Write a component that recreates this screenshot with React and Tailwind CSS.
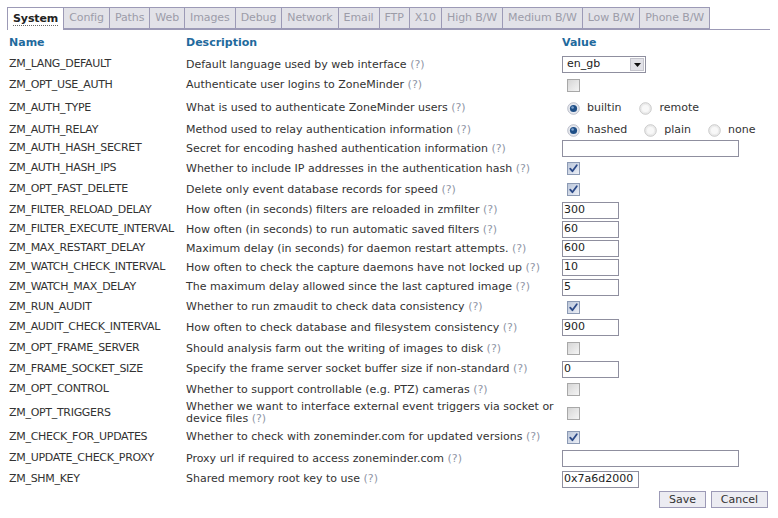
import React from "react";

const tabs = ["System","Config","Paths","Web","Images","Debug","Network","Email","FTP","X10","High B/W","Medium B/W","Low B/W","Phone B/W"];

const rows = [
  { n: "ZM_LANG_DEFAULT", d: "Default language used by web interface", h: 21, v: { t: "select", val: "en_gb" } },
  { n: "ZM_OPT_USE_AUTH", d: "Authenticate user logins to ZoneMinder", h: 20, v: { t: "check", c: false } },
  { n: "ZM_AUTH_TYPE", d: "What is used to authenticate ZoneMinder users", h: 26, v: { t: "radio", opts: [["builtin", true, 18], ["remote", false, 0]] } },
  { n: "ZM_AUTH_RELAY", d: "Method used to relay authentication information", h: 18, v: { t: "radio", opts: [["hashed", true, 17], ["plain", false, 17], ["none", false, 0]] } },
  { n: "ZM_AUTH_HASH_SECRET", d: "Secret for encoding hashed authentication information", h: 19, v: { t: "text", w: 177, val: "" } },
  { n: "ZM_AUTH_HASH_IPS", d: "Whether to include IP addresses in the authentication hash", h: 21, v: { t: "check", c: true } },
  { n: "ZM_OPT_FAST_DELETE", d: "Delete only event database records for speed", h: 21, v: { t: "check", c: true } },
  { n: "ZM_FILTER_RELOAD_DELAY", d: "How often (in seconds) filters are reloaded in zmfilter", h: 20, v: { t: "text", w: 57, val: "300" } },
  { n: "ZM_FILTER_EXECUTE_INTERVAL", d: "How often (in seconds) to run automatic saved filters", h: 19, v: { t: "text", w: 57, val: "60" } },
  { n: "ZM_MAX_RESTART_DELAY", d: "Maximum delay (in seconds) for daemon restart attempts.", h: 19, v: { t: "text", w: 57, val: "600" } },
  { n: "ZM_WATCH_CHECK_INTERVAL", d: "How often to check the capture daemons have not locked up", h: 19, v: { t: "text", w: 57, val: "10" } },
  { n: "ZM_WATCH_MAX_DELAY", d: "The maximum delay allowed since the last captured image", h: 20, v: { t: "text", w: 57, val: "5" } },
  { n: "ZM_RUN_AUDIT", d: "Whether to run zmaudit to check data consistency", h: 20, v: { t: "check", c: true } },
  { n: "ZM_AUDIT_CHECK_INTERVAL", d: "How often to check database and filesystem consistency", h: 21, v: { t: "text", w: 57, val: "900" } },
  { n: "ZM_OPT_FRAME_SERVER", d: "Should analysis farm out the writing of images to disk", h: 21, v: { t: "check", c: false } },
  { n: "ZM_FRAME_SOCKET_SIZE", d: "Specify the frame server socket buffer size if non-standard", h: 20, v: { t: "text", w: 57, val: "0" } },
  { n: "ZM_OPT_CONTROL", d: "Whether to support controllable (e.g. PTZ) cameras", h: 21, v: { t: "check", c: false } },
  { n: "ZM_OPT_TRIGGERS", d: "Whether we want to interface external event triggers via socket or", d2: "device files", h: 26, v: { t: "check", c: false } },
  { n: "ZM_CHECK_FOR_UPDATES", d: "Whether to check with zoneminder.com for updated versions", h: 22, v: { t: "check", c: true } },
  { n: "ZM_UPDATE_CHECK_PROXY", d: "Proxy url if required to access zoneminder.com", h: 21, v: { t: "text", w: 177, val: "" } },
  { n: "ZM_SHM_KEY", d: "Shared memory root key to use", h: 20, v: { t: "text", w: 77, val: "0x7a6d2000" } },
];

function Check({ c }) {
  return (
    <svg width="13" height="13" viewBox="0 0 13 13" className="ml-[5px]">
      <defs>
        <linearGradient id={c ? "gc" : "gu"} x1="0" y1="0" x2="1" y2="1">
          <stop offset="0" stopColor={c ? "#b8c4d8" : "#d4d4d4"} />
          <stop offset="1" stopColor={c ? "#eef1f8" : "#f6f6f6"} />
        </linearGradient>
      </defs>
      <rect x="0.5" y="0.5" width="12" height="12" fill={`url(#${c ? "gc" : "gu"})`} stroke={c ? "#8c9ab4" : "#a8a8a8"} />
      {c && <path d="M3.2 6.6 L5.4 9.2 L9.8 3.2" fill="none" stroke="#2c4a88" strokeWidth="1.8" strokeLinecap="round" strokeLinejoin="round" />}
    </svg>
  );
}

function Radio({ on }) {
  return (
    <svg width="13" height="13" viewBox="0 0 13 13">
      <circle cx="6.5" cy="6.5" r="5.8" fill={on ? "#e6e8ee" : "#ececec"} stroke={on ? "#b4b8c4" : "#c4c4c4"} strokeWidth="0.9" />
      {on ? (
        <>
          <circle cx="6.5" cy="6.5" r="3.6" fill="#1f4f86" />
          <circle cx="5.6" cy="5.5" r="1.3" fill="#7ea3cf" />
        </>
      ) : (
        <circle cx="6.5" cy="6.5" r="3.6" fill="#f8f8f8" />
      )}
    </svg>
  );
}

function Value({ v }) {
  if (v.t === "select") {
    return (
      <div className="flex h-[17px] w-[84px] items-center border border-[#8f8f9f] bg-white">
        <span className="flex-1 pl-[4px] text-[11px] text-[#222]">{v.val}</span>
        <span className="mr-[1px] flex h-[13px] w-[14px] items-center justify-center border border-[#c4c4cc] bg-[#e2e2e8]">
          <svg width="7" height="4" viewBox="0 0 7 4"><path d="M0 0 H7 L3.5 4 Z" fill="#111" /></svg>
        </span>
      </div>
    );
  }
  if (v.t === "check") return <Check c={v.c} />;
  if (v.t === "radio") {
    return (
      <div className="flex items-center pl-[5px]">
        {v.opts.map(([label, on, gap]) => (
          <div key={label} className="flex items-center" style={{ marginRight: gap }}>
            <Radio on={on} />
            <span className="ml-[7px] text-[11px] text-[#333]">{label}</span>
          </div>
        ))}
      </div>
    );
  }
  return (
    <div className="flex h-[17px] items-center border border-[#8f8f9f] bg-white pl-[1px] text-[11px] text-[#222]" style={{ width: v.w }}>
      {v.val}
    </div>
  );
}

const Q = () => <span className="text-[#8f96a6]">(?)</span>;

export default function App() {
  return (
    <div className="h-[518px] w-[778px] overflow-hidden bg-white text-[11px] text-[#333]" style={{ fontFamily: '"DejaVu Sans", Verdana, sans-serif' }}>
      <div className="ml-[7px] mr-[8px] mt-[7px] flex border-b border-[#9c9ab6]">
        {tabs.map((t, i) => (
          <div
            key={t}
            className={
              i === 0
                ? "mb-[-1px] flex h-[23px] items-center border border-b-0 border-[#9c9ab6] bg-white px-[5px] font-bold tracking-[-0.1px] text-[#222]"
                : "flex h-[22px] items-center border border-l-0 border-[#9c9ab6] bg-[#e2e2e8] px-[5px] tracking-[-0.1px] text-[#9c9ca8]"
            }
          >
            <span className={i === 0 ? "border-b border-dotted border-[#666] leading-[12px]" : ""}>{t}</span>
          </div>
        ))}
      </div>
      <div className="flex h-[24px] items-end pb-[3px] font-bold text-[#1f6a9d]">
        <div className="w-[186px] pl-[9px]">Name</div>
        <div className="w-[376px]">Description</div>
        <div>Value</div>
      </div>
      {rows.map((r) => (
        <div key={r.n} className="flex items-center" style={{ height: r.h }}>
          <div className="w-[186px] pl-[9px] tracking-[-0.3px]">{r.n}</div>
          <div className="w-[376px] leading-[12px]">
            {r.d2 ? (
              <>
                {r.d}
                <br />
                {r.d2} <Q />
              </>
            ) : (
              <>
                {r.d} <Q />
              </>
            )}
          </div>
          <Value v={r.v} />
        </div>
      ))}
      <div className="flex justify-end gap-[5px] pr-[10px] pt-[2px]">
        <button className="h-[17px] w-[47px] border border-[#9c9ab6] bg-[#ececf2] text-[11px] text-[#333]">Save</button>
        <button className="h-[17px] w-[57px] border border-[#9c9ab6] bg-[#ececf2] text-[11px] text-[#333]">Cancel</button>
      </div>
    </div>
  );
}
